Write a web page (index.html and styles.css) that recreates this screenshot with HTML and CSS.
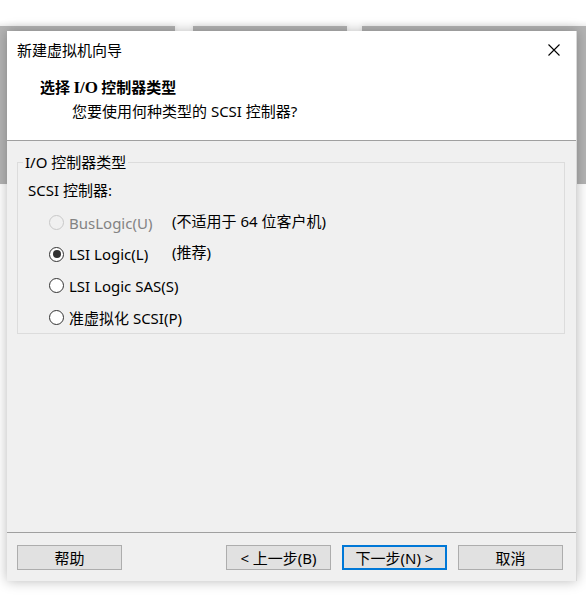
FILE: index.html
```html
<!DOCTYPE html>
<html lang="zh-CN">
<head>
<meta charset="utf-8">
<title>新建虚拟机向导</title>
<link rel="stylesheet" href="styles.css">
</head>
<body>
<div class="desk">
  <div class="bg-win bw1"></div>
  <div class="bg-win bw2"></div>
  <div class="bg-win bw3"></div>

  <div class="dialog">
    <div class="titlebar">
      <span class="title">新建虚拟机向导</span>
      <svg class="close" width="14" height="14" viewBox="0 0 14 14" aria-hidden="true">
        <path d="M1.5 1.5 L12.5 12.5 M12.5 1.5 L1.5 12.5" stroke="#000" stroke-width="1.1" fill="none"/>
      </svg>
    </div>

    <div class="header">
      <div class="h-title">选择 <span class="serif">I/O</span> 控制器类型</div>
      <div class="h-sub">您要使用何种类型的 SCSI 控制器?</div>
    </div>

    <div class="body">
      <fieldset class="group">
        <legend>I/O 控制器类型</legend>
        <div class="group-label">SCSI 控制器:</div>
        <div class="options">
          <div class="opt disabled"><span class="radio"></span><span class="opt-text">BusLogic(U)</span></div>
          <div class="note">(不适用于 64 位客户机)</div>

          <div class="opt"><span class="radio checked"></span><span class="opt-text">LSI Logic(L)</span></div>
          <div class="note">(推荐)</div>

          <div class="opt"><span class="radio"></span><span class="opt-text">LSI Logic SAS(S)</span></div>
          <div class="note"></div>

          <div class="opt"><span class="radio"></span><span class="opt-text">准虚拟化 SCSI(P)</span></div>
          <div class="note"></div>
        </div>
      </fieldset>
    </div>

    <div class="footer">
      <button class="btn">帮助</button>
      <span class="spacer"></span>
      <button class="btn">&lt; 上一步(B)</button>
      <button class="btn primary">下一步(N) &gt;</button>
      <button class="btn">取消</button>
    </div>
  </div>
</div>
</body>
</html>
```

FILE: styles.css
```css
* { box-sizing: border-box; }

html, body {
  margin: 0;
  padding: 0;
  background: #ffffff;
}

body {
  font-family: "Noto Sans", "Noto Sans CJK SC", sans-serif;
  font-size: 15px;
  color: #000;
}

.desk {
  position: relative;
  width: 586px;
  height: 600px;
  overflow: hidden;
  padding: 31px 0 0 7px;
}

.bg-win {
  position: absolute;
  top: 26px;
  height: 158px;
  background: #b4b4b4;
  box-shadow: 0 -2px 5px rgba(0,0,0,0.08);
}
.bw1 { left: -10px; width: 185px; }
.bw2 { left: 193px; width: 154px; }
.bw3 { left: 362px; width: 240px; }

.dialog {
  position: relative;
  width: 570px;
  height: 550px;
  background: #f0f0f0;
  display: flex;
  flex-direction: column;
  box-shadow: 0 0 12px rgba(0,0,0,0.28);
  border-right: 1px solid #d8d8d8;
}

.titlebar {
  height: 38px;
  background: #fff;
  display: flex;
  align-items: center;
  padding: 0 15px 0 10px;
}
.title {
  flex: 1;
  font-family: "Noto Sans CJK SC", sans-serif;
  font-size: 15px;
  line-height: 20px;
}
.close { display: block; }

.header {
  background: #fff;
  height: 72px;
  padding-top: 8px;
  border-bottom: 1px solid #a0a0a0;
}
.h-title {
  padding-left: 33px;
  font-family: "Noto Sans CJK SC", sans-serif;
  font-weight: bold;
  font-size: 15px;
  line-height: 20px;
}
.serif {
  font-family: "Liberation Serif", serif;
  font-size: 17px;
}
.h-sub {
  padding-left: 65px;
  margin-top: 3px;
  font-size: 15px;
  line-height: 20px;
}

.body {
  flex: 1;
  padding: 11px 11px 0 10px;
}

.group {
  margin: 0;
  padding: 0;
  border: 1px solid #dcdcdc;
  min-width: 0;
}
.group legend {
  margin-left: 5px;
  padding: 0 2px;
  line-height: 20px;
}
.group-label {
  margin-top: 8px;
  padding-left: 10px;
  line-height: 20px;
}

.options {
  margin-top: 7px;
  display: grid;
  grid-template-columns: 123px 1fr;
  grid-auto-rows: 31.6px;
  padding-left: 31px;
}
.opt {
  display: flex;
  align-items: center;
  gap: 5px;
  line-height: 20px;
  white-space: nowrap;
}
.note {
  display: flex;
  align-items: center;
  padding-bottom: 5px;
  white-space: nowrap;
}

.radio {
  width: 15px;
  height: 15px;
  border: 1px solid #333;
  border-radius: 50%;
  background: #fff;
  display: flex;
  align-items: center;
  justify-content: center;
  flex: none;
}
.radio.checked::after {
  content: "";
  width: 8px;
  height: 8px;
  border-radius: 50%;
  background: #333;
}
.disabled .radio {
  border-color: #c8c8c8;
  background: #f0f0f0;
}
.disabled .opt-text { color: #838383; }

.footer {
  height: 49px;
  border-top: 1px solid #a0a0a0;
  padding: 12px 13px 0 10px;
  display: flex;
  align-items: flex-start;
  gap: 11px;
}
.spacer { flex: 1; }

.btn {
  width: 105px;
  height: 25px;
  padding: 0;
  background: #e1e1e1;
  border: 1px solid #adadad;
  font-family: "Noto Sans", "Noto Sans CJK SC", sans-serif;
  font-size: 15px;
  line-height: 20px;
  color: #000;
}
.btn.primary {
  border: 2px solid #0078d7;
}
```
